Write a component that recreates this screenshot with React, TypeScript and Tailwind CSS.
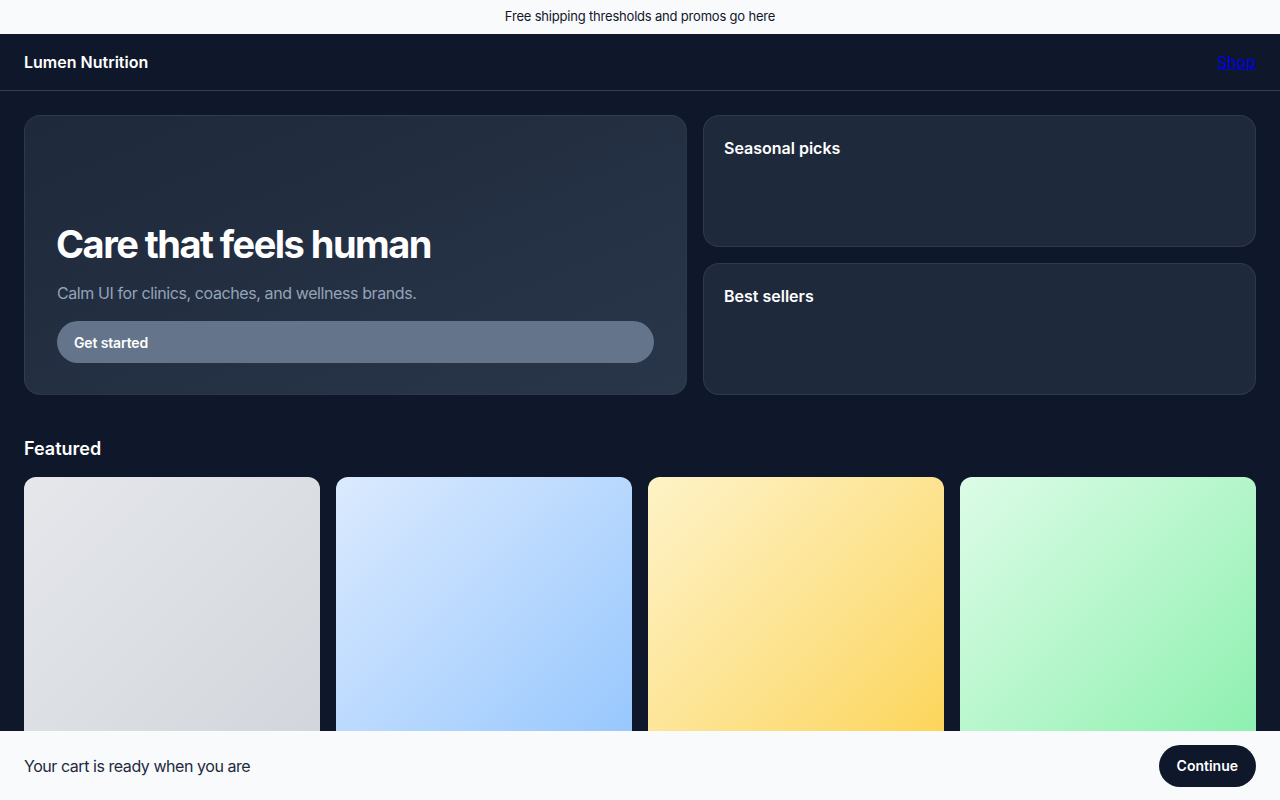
import React from "react";

const font = { fontFamily: "Inter, 'Noto Sans', sans-serif" };

export default function App() {
  const cards = [
    "bg-gradient-to-br from-[#e5e7eb] to-[#d1d5db]",
    "bg-gradient-to-br from-[#dbeafe] to-[#93c5fd]",
    "bg-gradient-to-br from-[#fef3c7] to-[#fcd34d]",
    "bg-gradient-to-br from-[#dcfce7] to-[#86efac]",
  ];
  return (
    <div className="min-h-screen bg-[#0f172a] text-white" style={font}>
      <div className="h-[34px] bg-[#f8fafc] text-[#0f172a] text-[13px] flex items-center justify-center tracking-[-0.015em]">
        Free shipping thresholds and promos go here
      </div>
      <header className="h-[57px] flex items-center justify-between px-6 border-b border-[#334155]">
        <div className="text-[16px] font-semibold">Lumen Nutrition</div>
        <a href="#" className="text-[#0000ee] underline text-[16px]">Shop</a>
      </header>
      <main className="px-6 pt-6 pb-24">
        <div className="grid grid-cols-[663px_1fr] gap-4">
          <div className="h-[280px] rounded-2xl border border-white/5 bg-gradient-to-br from-[#1e293b] to-[#293649] px-8 pt-8 pb-[31px] flex flex-col justify-end">
            <h1 className="text-[38px] leading-[46px] font-bold tracking-[-0.04em] -ml-[1px]">Care that feels human</h1>
            <p className="mt-[14px] text-[16px] text-[#94a3b8] tracking-[-0.025em]">Calm UI for clinics, coaches, and wellness brands.</p>
            <button className="mt-[16px] h-[42px] w-full rounded-full bg-[#64748b] text-left pl-[17px] text-[14px] font-semibold text-white tracking-[-0.01em]">
              Get started
            </button>
          </div>
          <div className="flex flex-col gap-4">
            <div className="h-[132px] rounded-2xl border border-[#334155]/70 bg-[#1e293b] px-5 pt-[20px]">
              <h3 className="text-[16px] font-semibold">Seasonal picks</h3>
            </div>
            <div className="h-[132px] rounded-2xl border border-[#334155]/70 bg-[#1e293b] px-5 pt-[20px]">
              <h3 className="text-[16px] font-semibold">Best sellers</h3>
            </div>
          </div>
        </div>
        <section className="mt-[40px]">
          <h2 className="text-[18px] leading-[28px] font-semibold">Featured</h2>
          <div className="mt-[14px] grid grid-cols-4 gap-4">
            {cards.map((c, i) => (
              <div key={i} className={`aspect-square rounded-xl ${c}`} />
            ))}
          </div>
        </section>
      </main>
      <div className="fixed left-0 right-0 bottom-0 h-[69px] bg-[#f8fafc] flex items-center justify-between px-6">
        <span className="text-[16px] text-[#1e293b] tracking-[-0.028em]">Your cart is ready when you are</span>
        <button className="h-[42px] px-[18px] rounded-full bg-[#0f172a] text-white text-[14px] font-semibold">Continue</button>
      </div>
    </div>
  );
}
